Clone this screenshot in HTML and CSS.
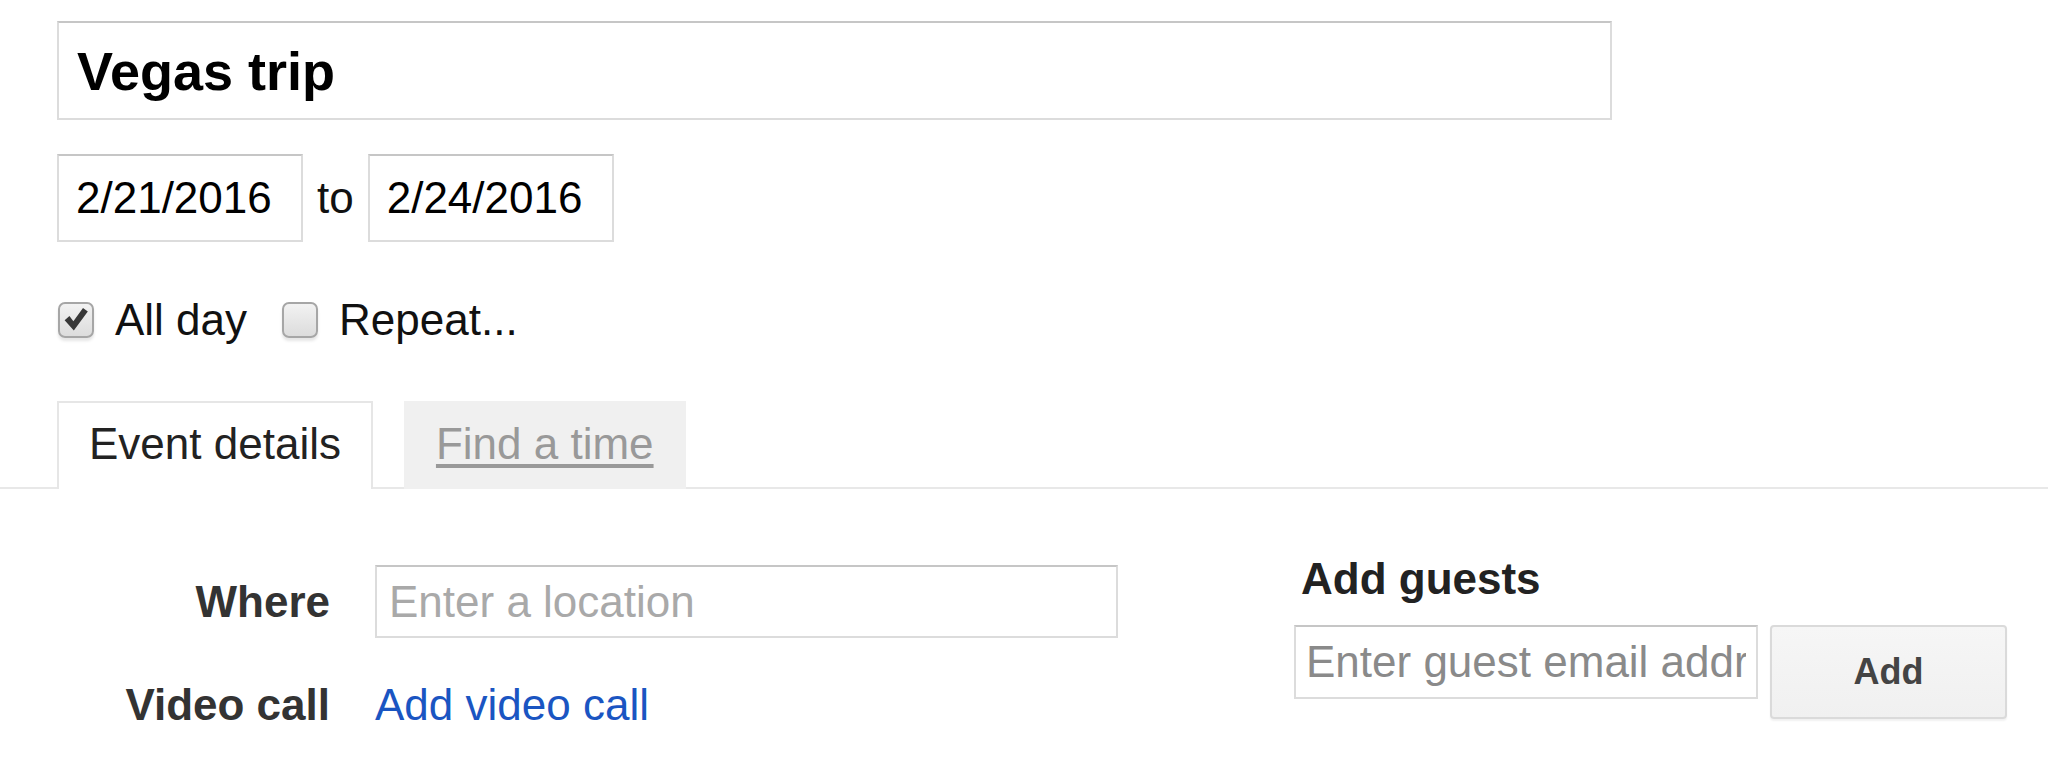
FILE: index.html
```html
<!DOCTYPE html>
<html lang="en">
<head>
<meta charset="utf-8">
<title>Vegas trip</title>
<link rel="stylesheet" href="styles.css">
</head>
<body>
<div class="page">
  <div class="head">
    <input class="title-input" type="text" value="Vegas trip">
    <div class="date-row">
      <input class="date-input" type="text" value="2/21/2016">
      <span class="to">to</span>
      <input class="date-input" type="text" value="2/24/2016">
    </div>
    <div class="check-row">
      <label class="check">
        <span class="box checked">
          <svg viewBox="0 0 32 32" width="32" height="32"><path d="M3 17.5 L8.5 12.5 L13 18.5 L24 3.5 L29.5 7.5 L13.5 29 Z" fill="#383838"/></svg>
        </span>
        <span class="check-label">All day</span>
      </label>
      <label class="check">
        <span class="box"></span>
        <span class="check-label">Repeat...</span>
      </label>
    </div>
  </div>

  <div class="tabs">
    <div class="tab active">Event details</div>
    <div class="tab inactive"><a href="#">Find a time</a></div>
  </div>

  <div class="details">
    <div class="fields">
      <div class="field-label">Where</div>
      <input class="where-input" type="text" placeholder="Enter a location">
      <div class="field-label">Video call</div>
      <a class="video-link" href="#">Add video call</a>
    </div>
    <div class="guests">
      <div class="guests-title">Add guests</div>
      <div class="guests-row">
        <input class="guest-input" type="text" placeholder="Enter guest email address">
        <button class="add-btn" type="button">Add</button>
      </div>
    </div>
  </div>
</div>
</body>
</html>
```

FILE: styles.css
```css
* { box-sizing: border-box; }

html, body {
  margin: 0;
  padding: 0;
  background: #ffffff;
}

body {
  font-family: "Liberation Sans", Arial, Helvetica, sans-serif;
  color: #111;
  width: 2048px;
  height: 759px;
  overflow: hidden;
}

.page {
  padding-top: 21px;
}

.head {
  padding-left: 57px;
}

input {
  font-family: "Liberation Sans", Arial, Helvetica, sans-serif;
  margin: 0;
  outline: none;
  background: #fff;
  border: 2px solid #dcdcdc;
  border-top-color: #c6c6c6;
  border-radius: 0;
}

.title-input {
  display: block;
  width: 1555px;
  height: 99px;
  padding: 0 18px;
  font-size: 54px;
  font-weight: bold;
  color: #000;
}

.date-row {
  display: flex;
  align-items: center;
  margin-top: 34px;
}

.date-input {
  width: 246px;
  height: 88px;
  padding: 0 17px;
  font-size: 44px;
  color: #000;
}

.to {
  font-size: 44px;
  color: #111;
  margin: 0 14px;
  line-height: 50px;
}

.check-row {
  display: flex;
  align-items: center;
  margin-top: 53px;
  height: 50px;
}

.check {
  display: flex;
  align-items: center;
  margin-right: 34px;
}

.box {
  width: 36px;
  height: 36px;
  border: 2px solid #a6a6a6;
  border-radius: 7px;
  background: linear-gradient(#f2f2f2, #dcdcdc);
  box-shadow: 0 3px 3px rgba(0, 0, 0, 0.1);
  display: flex;
  align-items: center;
  justify-content: center;
  margin-left: 1px;
}

.box svg {
  display: block;
  width: 28px;
  height: 28px;
  margin-top: -2px;
}

.check-label {
  font-size: 44px;
  line-height: 50px;
  color: #111;
  margin-left: 21px;
}

.tabs {
  display: flex;
  align-items: flex-end;
  margin-top: 56px;
  padding-left: 57px;
  border-bottom: 2px solid #e8e8e8;
  height: 88px;
}

.tab {
  font-size: 44px;
  line-height: 50px;
  padding: 16px 30px 18px;
  margin-bottom: -2px;
  border: 2px solid transparent;
  border-bottom: none;
}

.tab.active {
  background: #fff;
  border-color: #e6e6e6;
  color: #222;
  height: 88px;
}

.tab.inactive {
  background: #f0f0f0;
  margin-left: 31px;
  height: 88px;
}

.tab.inactive a {
  color: #999;
  text-decoration: underline;
  text-decoration-thickness: 4px;
  text-underline-offset: 5px;
}

.details {
  display: flex;
  align-items: flex-start;
  padding-left: 57px;
  padding-top: 65px;
}

.fields {
  display: grid;
  grid-template-columns: 273px 743px;
  column-gap: 45px;
  row-gap: 42px;
  align-items: center;
  margin-top: 11px;
}

.field-label {
  text-align: right;
  font-size: 44px;
  line-height: 50px;
  font-weight: bold;
  color: #333;
}

.where-input {
  width: 743px;
  height: 73px;
  padding: 0 12px;
  font-size: 44px;
  color: #222;
}

.where-input::placeholder {
  color: #a9a9a9;
}

.video-link {
  font-size: 44px;
  line-height: 50px;
  color: #1a55c2;
  text-decoration: none;
}

.guests {
  margin-left: 176px;
}

.guests-title {
  font-size: 44px;
  line-height: 50px;
  font-weight: bold;
  color: #222;
  padding-left: 7px;
}

.guests-row {
  display: flex;
  align-items: flex-start;
  margin-top: 21px;
}

.guest-input {
  width: 464px;
  height: 74px;
  padding: 0 10px;
  font-size: 44px;
  color: #222;
}

.guest-input::placeholder {
  color: #8a8a8a;
}

.add-btn {
  margin-left: 12px;
  width: 237px;
  height: 94px;
  border: 2px solid #dadada;
  border-radius: 4px;
  background: linear-gradient(#f6f6f6, #f0f0f0);
  box-shadow: 0 2px 2px rgba(0, 0, 0, 0.06);
  font-family: "Liberation Sans", Arial, Helvetica, sans-serif;
  font-size: 36px;
  font-weight: bold;
  color: #444;
  padding: 0;
}
```
